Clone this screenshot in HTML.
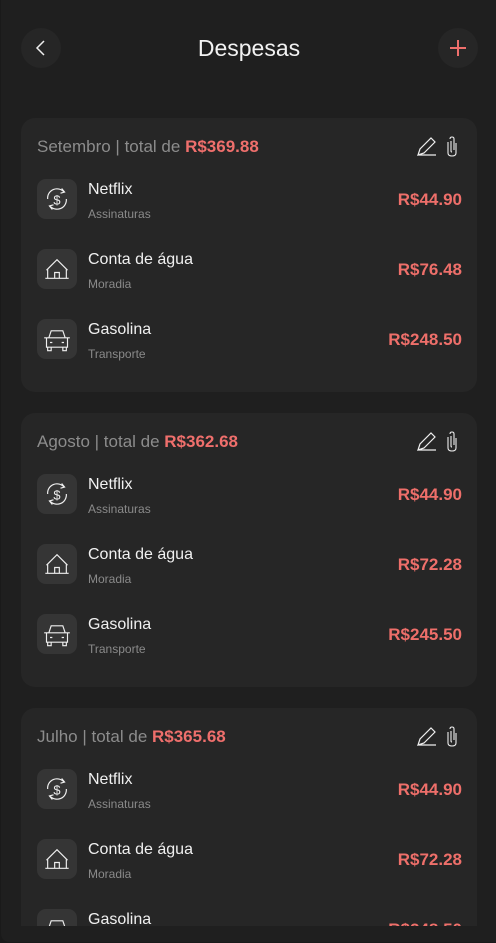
<!DOCTYPE html>
<html><head><meta charset="utf-8"><style>
*{margin:0;padding:0;box-sizing:border-box}
body{width:496px;height:943px;background:#1a1a1a;font-family:"Liberation Sans",sans-serif;overflow:hidden;position:relative}
.frame{position:absolute;left:1px;top:0;width:495px;height:942px;background:#1f1f1f;border-radius:0 0 0 8px;overflow:hidden}
.clip{position:absolute;left:0;top:0;width:495px;height:926px;overflow:hidden}
.circ{position:absolute;width:40px;height:40px;border-radius:50%;background:#262626;top:28px}
.title{position:absolute;top:35px;left:0;width:496px;text-align:center;color:#f2f2f2;font-size:23px}
.card{position:absolute;left:20px;width:456px;height:274px;background:#262626;border-radius:14px}
.hd{position:absolute;left:16px;top:19px;font-size:17px;color:#8c8c8c}
.hd b{color:#ef6f6c;font-weight:bold}
.acts{position:absolute;right:14px;top:17px}
.row{position:absolute;left:16px;width:425px;height:40px}
.ib{position:absolute;left:0;top:0;width:40px;height:40px;border-radius:9px;background:#353535}
.ib svg{position:absolute;left:6px;top:6px}
.nm{position:absolute;left:51px;top:2px;color:#f0f0f0;font-size:16px}
.sb{position:absolute;left:51px;top:28px;color:#8a8a8a;font-size:12px}
.am{position:absolute;right:0;top:11px;color:#ee6f6a;font-size:17px;font-weight:bold}
</style></head><body>
<div class="frame"><div class="clip">
<div class="circ" style="left:20px"><svg width="40" height="40"><path d="M23 13 L16 20 L23 27" stroke="#eee" stroke-width="1.5" fill="none"/></svg></div>
<div class="title">Despesas</div>
<div class="circ" style="left:437px"><svg width="40" height="40"><path d="M20 12v16M12 20h16" stroke="#ef6f6c" stroke-width="2" fill="none"/></svg></div>

<div class="card" style="top:118px">
<div class="hd">Setembro | total de <b>R$369.88</b></div>
<div class="acts"><svg width="48" height="24"><path d="M3 20 L5 14 L16 3 L20 7 L9 18 Z M3 20 L21 20" stroke="#eee" stroke-width="1.2" fill="none"/><path d="M35 4 Q35 2 37 2 Q39 2 39 4 V15 M33 7 V18 Q33 21 37 21 Q41 21 41 18 V8 M36 6 V16 Q36 17 37 17" stroke="#eee" stroke-width="1.1" fill="none"/></svg></div>
<div class="row" style="top:61px"><div class="ib"><svg width="28" height="28" viewBox="0 0 24 24"><path d="M4 12 A8 8 0 0 1 18 6 M20 12 A8 8 0 0 1 6 18 M16 3 L18.5 6 L15 7 M8 21 L5.5 18 L9 17" stroke="#eee" stroke-width="1" fill="none"/><text x="12" y="16.5" font-size="11" fill="#eee" text-anchor="middle" font-family="Liberation Sans">$</text></svg></div><div class="nm">Netflix</div><div class="sb">Assinaturas</div><div class="am">R$44.90</div></div>
<div class="row" style="top:131px"><div class="ib"><svg width="28" height="28" viewBox="0 0 24 24"><path d="M2 20 H22 M4 20 V12 L12 4 L20 12 V20 M3 13 L12 4 L21 13 M10 20 V15 H14 V20" stroke="#eee" stroke-width="1" fill="none"/></svg></div><div class="nm">Conta de água</div><div class="sb">Moradia</div><div class="am">R$76.48</div></div>
<div class="row" style="top:201px"><div class="ib"><svg width="28" height="28" viewBox="0 0 24 24"><path d="M5 11 L7 5 H17 L19 11 M1 11 H23 M3 11 V19 H21 V11 M4 19 V22 H7 V19 M17 19 V22 H20 V19 M6 15 H8 M16 15 H18" stroke="#eee" stroke-width="1" fill="none"/></svg></div><div class="nm">Gasolina</div><div class="sb">Transporte</div><div class="am">R$248.50</div></div>
</div>

<div class="card" style="top:413px">
<div class="hd">Agosto | total de <b>R$362.68</b></div>
<div class="acts"><svg width="48" height="24"><path d="M3 20 L5 14 L16 3 L20 7 L9 18 Z M3 20 L21 20" stroke="#eee" stroke-width="1.2" fill="none"/><path d="M35 4 Q35 2 37 2 Q39 2 39 4 V15 M33 7 V18 Q33 21 37 21 Q41 21 41 18 V8 M36 6 V16 Q36 17 37 17" stroke="#eee" stroke-width="1.1" fill="none"/></svg></div>
<div class="row" style="top:61px"><div class="ib"><svg width="28" height="28" viewBox="0 0 24 24"><path d="M4 12 A8 8 0 0 1 18 6 M20 12 A8 8 0 0 1 6 18 M16 3 L18.5 6 L15 7 M8 21 L5.5 18 L9 17" stroke="#eee" stroke-width="1" fill="none"/><text x="12" y="16.5" font-size="11" fill="#eee" text-anchor="middle" font-family="Liberation Sans">$</text></svg></div><div class="nm">Netflix</div><div class="sb">Assinaturas</div><div class="am">R$44.90</div></div>
<div class="row" style="top:131px"><div class="ib"><svg width="28" height="28" viewBox="0 0 24 24"><path d="M2 20 H22 M4 20 V12 L12 4 L20 12 V20 M3 13 L12 4 L21 13 M10 20 V15 H14 V20" stroke="#eee" stroke-width="1" fill="none"/></svg></div><div class="nm">Conta de água</div><div class="sb">Moradia</div><div class="am">R$72.28</div></div>
<div class="row" style="top:201px"><div class="ib"><svg width="28" height="28" viewBox="0 0 24 24"><path d="M5 11 L7 5 H17 L19 11 M1 11 H23 M3 11 V19 H21 V11 M4 19 V22 H7 V19 M17 19 V22 H20 V19 M6 15 H8 M16 15 H18" stroke="#eee" stroke-width="1" fill="none"/></svg></div><div class="nm">Gasolina</div><div class="sb">Transporte</div><div class="am">R$245.50</div></div>
</div>

<div class="card" style="top:708px">
<div class="hd">Julho | total de <b>R$365.68</b></div>
<div class="acts"><svg width="48" height="24"><path d="M3 20 L5 14 L16 3 L20 7 L9 18 Z M3 20 L21 20" stroke="#eee" stroke-width="1.2" fill="none"/><path d="M35 4 Q35 2 37 2 Q39 2 39 4 V15 M33 7 V18 Q33 21 37 21 Q41 21 41 18 V8 M36 6 V16 Q36 17 37 17" stroke="#eee" stroke-width="1.1" fill="none"/></svg></div>
<div class="row" style="top:61px"><div class="ib"><svg width="28" height="28" viewBox="0 0 24 24"><path d="M4 12 A8 8 0 0 1 18 6 M20 12 A8 8 0 0 1 6 18 M16 3 L18.5 6 L15 7 M8 21 L5.5 18 L9 17" stroke="#eee" stroke-width="1" fill="none"/><text x="12" y="16.5" font-size="11" fill="#eee" text-anchor="middle" font-family="Liberation Sans">$</text></svg></div><div class="nm">Netflix</div><div class="sb">Assinaturas</div><div class="am">R$44.90</div></div>
<div class="row" style="top:131px"><div class="ib"><svg width="28" height="28" viewBox="0 0 24 24"><path d="M2 20 H22 M4 20 V12 L12 4 L20 12 V20 M3 13 L12 4 L21 13 M10 20 V15 H14 V20" stroke="#eee" stroke-width="1" fill="none"/></svg></div><div class="nm">Conta de água</div><div class="sb">Moradia</div><div class="am">R$72.28</div></div>
<div class="row" style="top:201px"><div class="ib"><svg width="28" height="28" viewBox="0 0 24 24"><path d="M5 11 L7 5 H17 L19 11 M1 11 H23 M3 11 V19 H21 V11 M4 19 V22 H7 V19 M17 19 V22 H20 V19 M6 15 H8 M16 15 H18" stroke="#eee" stroke-width="1" fill="none"/></svg></div><div class="nm">Gasolina</div><div class="sb">Transporte</div><div class="am">R$248.50</div></div>
</div>
</div></div>
</body></html>
